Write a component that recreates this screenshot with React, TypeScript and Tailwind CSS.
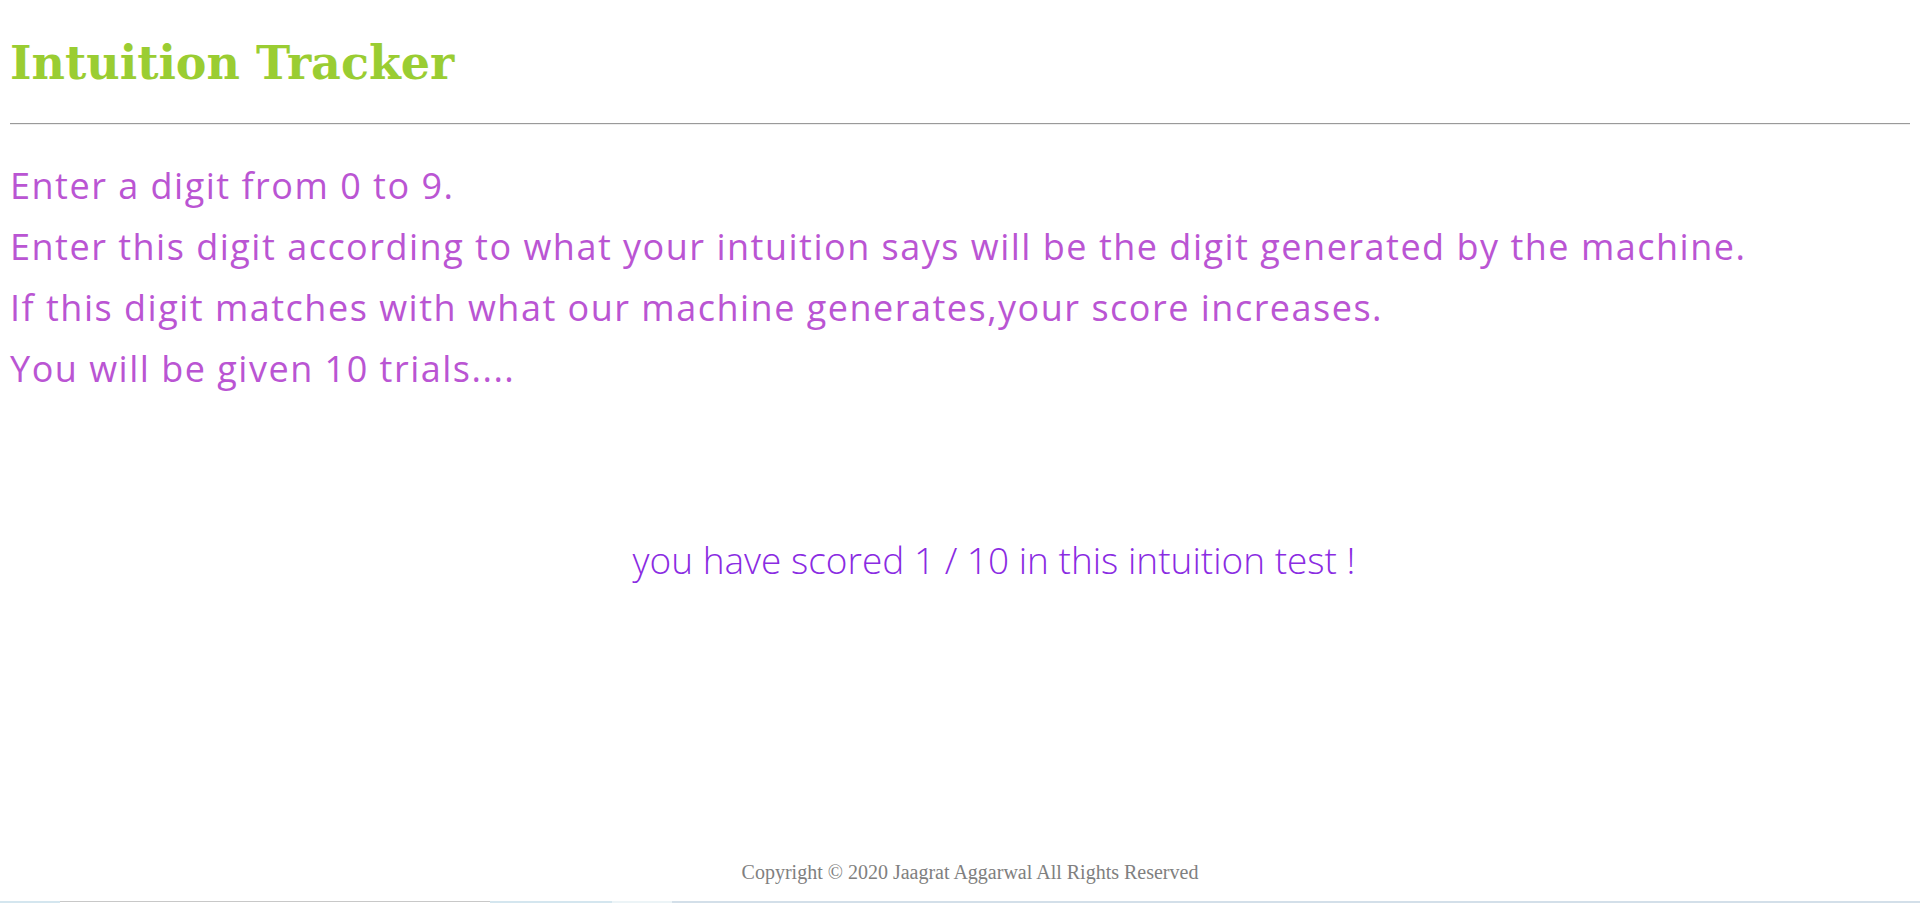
const rules = [
  'Enter a digit from 0 to 9.',
  'Enter this digit according to what your intuition says will be the digit generated by the machine.',
  'If this digit matches with what our machine generates,your score increases.',
  'You will be given 10 trials....',
];

const App = () => {
  return (
    <div className="min-h-[903px] flex flex-col bg-white">
      <div className="px-[10px] flex-1">
        <h1 className="pt-[33px] text-[46px] leading-[60px] font-bold text-[#9acd32] font-['Georgia','DejaVu_Serif',serif]">
          Intuition Tracker
        </h1>
        <hr className="mt-[30px] border-t border-t-[#9a9a9a] border-b border-b-[#eeeeee]" />
        <div className="mt-[30px] text-[36px] leading-[61px] tracking-[1.5px] text-[#ba55d3] font-['Trebuchet_MS','Open_Sans',sans-serif]">
          {rules.map(line => (
            <p key={line}>{line}</p>
          ))}
        </div>
        <p className="mt-[136px] pl-[68px] text-center text-[37px] leading-[50px] font-light text-[#8a2be2] font-['Segoe_UI','Open_Sans',sans-serif]">
          you have scored 1 / 10 in this intuition test !
        </p>
      </div>
      <footer className="pb-[14px] pl-[20px] text-center text-[20px] text-[#808080] font-['Liberation_Serif',serif]">
        Copyright © 2020 Jaagrat Aggarwal All Rights Reserved
      </footer>
      <div className="flex h-[2px]">
        <div className="w-[60px] bg-[#d4e6ef]" />
        <div className="w-[430px] bg-white border-t border-t-[#c8c8c8]" />
        <div className="w-[122px] bg-[#d4e6ef]" />
        <div className="w-[60px] bg-[#ecf4f7]" />
        <div className="flex-1 bg-[#d3dfe9]" />
      </div>
    </div>
  );
};

export default App;
